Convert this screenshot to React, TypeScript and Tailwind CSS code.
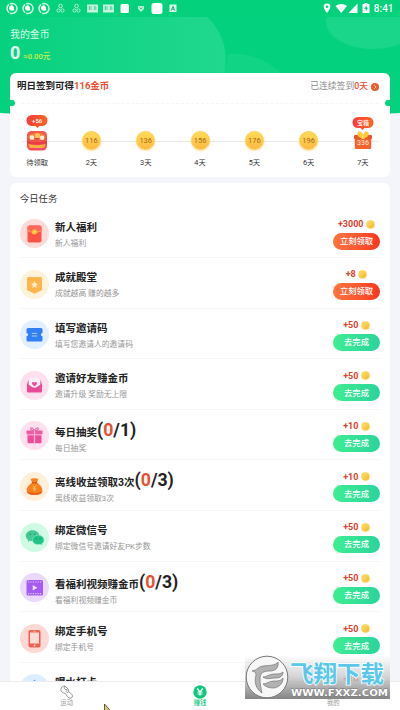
import type { ReactNode } from "react";
import clsx from "clsx";

const FONT = "font-['Roboto','Noto_Sans_CJK_SC',sans-serif]";

const DAYS = [
  { label: "待领取", coins: "+56" },
  { label: "2天", coins: "116" },
  { label: "3天", coins: "136" },
  { label: "4天", coins: "156" },
  { label: "5天", coins: "176" },
  { label: "6天", coins: "196" },
  { label: "7天", coins: "336" },
];

type Task = {
  title: string;
  total?: number;
  desc: string;
  reward: string;
  claim?: boolean;
  bg: string;
  icon: ReactNode;
};

const TASKS: Task[] = [
  {
    title: "新人福利",
    desc: "新人福利",
    reward: "+3000",
    claim: true,
    bg: "bg-[#fddbd8]",
    icon: (
      <>
        <rect x="7.5" y="6.5" width="14" height="17" rx="2" fill="#fd5347" />
        <path d="M7.5 11.500c4 2.500 10 2.500 14 0V8.500a2 2 0 0 0-2-2h-10a2 2 0 0 0-2 2z" fill="#ff695c" />
        <path d="M7.500 11.500c4 2.500 10 2.500 14 0" fill="none" stroke="#ffab55" strokeWidth=".9" />
        <circle cx="14.500" cy="13" r="2.500" fill="#ffca45" />
      </>
    ),
  },
  {
    title: "成就殿堂",
    desc: "成就越高 赚的越多",
    reward: "+8",
    claim: true,
    bg: "bg-[#fff2da]",
    icon: (
      <>
        <path d="M7 8.500a1.500 1.500 0 0 1 1.500-1.500h12A1.500 1.500 0 0 1 22 8.500V20l-7.500 3.700L7 20z" fill="#fdb54d" />
        <path d="m14.500 11.300 1.100 2.200 2.400.3-1.800 1.700.5 2.400-2.200-1.200-2.200 1.200.5-2.400-1.800-1.700 2.400-.3z" fill="#fff0ce" />
      </>
    ),
  },
  {
    title: "填写邀请码",
    desc: "填写您邀请人的邀请码",
    reward: "+50",
    bg: "bg-[#e2efff]",
    icon: (
      <>
        <path d="M6.500 9.500a1.500 1.500 0 0 1 1.500-1.500h13a1.500 1.500 0 0 1 1.500 1.500v3.500a1.600 1.600 0 0 0 0 3.200v3.800a1.500 1.500 0 0 1-1.500 1.500H8A1.500 1.500 0 0 1 6.500 20v-3.800a1.600 1.600 0 0 0 0-3.200z" fill="#317ff6" />
        <path d="M11.800 13.400h5.400M11.800 16h5.400" stroke="#a8ceff" strokeWidth="1" />
      </>
    ),
  },
  {
    title: "邀请好友赚金币",
    desc: "邀请升级 奖励无上限",
    reward: "+50",
    bg: "bg-[#fee0ee]",
    icon: (
      <>
        <path d="M7 12 9.500 8h10l2.500 4v3H7z" fill="#f386b8" />
        <rect x="9" y="7" width="11" height="11" rx="1.500" fill="#fff0f7" />
        <path d="M14.500 15.200c-4.400-2.700-2-5.400 0-3.600 2-1.800 4.400.9 0 3.600z" fill="#ec4d98" />
        <path d="M7 12.500l5 3.500c1.500 1 3.500 1 5 0l5-3.500V20a1.500 1.500 0 0 1-1.500 1.500h-12A1.500 1.500 0 0 1 7 20z" fill="#ea4a95" />
      </>
    ),
  },
  {
    title: "每日抽奖",
    total: 1,
    desc: "每日抽奖",
    reward: "+10",
    bg: "bg-[#fee0ee]",
    icon: (
      <>
        <path d="M14.500 10c-5-.5-4.500-4-2.300-3 1.300.6 2.300 3 2.300 3s1-2.400 2.300-3c2.200-1 2.700 2.500-2.300 3z" fill="none" stroke="#ee67a8" strokeWidth="1.100" />
        <rect x="6.500" y="9.500" width="16" height="4" rx=".8" fill="#ef5ba2" />
        <path d="M7.500 14.200h14V21a1.300 1.300 0 0 1-1.300 1.300H8.800A1.300 1.300 0 0 1 7.500 21z" fill="#ec4c98" />
        <path d="M14.500 9.500v12.800" stroke="#fbbcd9" strokeWidth="1.300" />
      </>
    ),
  },
  {
    title: "离线收益领取3次",
    total: 3,
    desc: "离线收益领取3次",
    reward: "+10",
    bg: "bg-[#fff0dc]",
    icon: (
      <>
        <path d="M10.500 6.500c1.500 1 2.500-.8 4 0 1.500-.8 2.500 1 4 0l-1.500 4.200c3.500 1.900 5.700 5.200 5.400 8.300-.3 3-3.900 3.800-7.900 3.800S7 22 6.700 19c-.3-3.100 1.900-6.400 5.400-8.300z" fill="#f9801f" />
        <path d="M7 19.500c4 2 11 2 15.300-.3-.8 2.900-4 3.600-7.800 3.600S7.700 22.200 7 19.500z" fill="#ef5b12" />
        <path d="M12 10.700h5" stroke="#d9480d" strokeWidth="1.100" />
        <path d="m12.800 13.500 1.700 2 1.700-2M14.500 15.500v4M12.700 16.200h3.600M12.700 17.900h3.600" fill="none" stroke="#ffc55d" strokeWidth=".8" />
      </>
    ),
  },
  {
    title: "绑定微信号",
    desc: "绑定微信号邀请好友PK步数",
    reward: "+50",
    bg: "bg-[#cffae3]",
    icon: (
      <>
        <path d="M12.500 7.200c-4 0-6.700 2.500-6.700 5.500 0 1.800.9 3.300 2.500 4.300l-.5 1.900 2.300-1.200c5.500 1.300 9.300-1.500 9.300-5 0-3-2.900-5.500-6.900-5.500z" fill="#45c994" />
        <path d="M18.300 12.200c-3.400 0-5.900 2-5.900 4.700s2.500 4.700 5.900 4.700c.7 0 1.400-.1 2-.3l2 1-.4-1.600c1.300-.9 2.100-2.200 2.100-3.800 0-2.700-2.400-4.700-5.700-4.700z" fill="#1fc583" stroke="#baf3d8" strokeWidth=".4" />
        <g fill="#18875b">
          <circle cx="10.200" cy="11.200" r=".7" />
          <circle cx="14.600" cy="11.200" r=".7" />
          <circle cx="16.400" cy="15.700" r=".6" />
          <circle cx="20.100" cy="15.700" r=".6" />
        </g>
      </>
    ),
  },
  {
    title: "看福利视频赚金币",
    total: 3,
    desc: "看福利视频赚金币",
    reward: "+50",
    bg: "bg-[#ead9fd]",
    icon: (
      <>
        <rect x="6.500" y="7" width="16.500" height="15.500" rx="1.500" fill="#a45bf3" />
        <path d="M8 9h14M8 20.600h14" stroke="#e4ccff" strokeWidth="1.200" strokeDasharray="1.200 1.200" />
        <path d="M12.700 12v5.600l4.700-2.800z" fill="#f0e0ff" />
      </>
    ),
  },
  {
    title: "绑定手机号",
    desc: "绑定手机号",
    reward: "+50",
    bg: "bg-[#fed8d4]",
    icon: (
      <>
        <rect x="8.500" y="6" width="12" height="17.500" rx="2" fill="#f0614f" />
        <rect x="10" y="8.500" width="9" height="11" fill="#ffdcd6" />
        <path d="M13 7.300h3" stroke="#ffc5bd" strokeWidth=".7" />
        <circle cx="14.500" cy="21.500" r=".9" fill="#ffdcd6" />
      </>
    ),
  },
  {
    title: "喝水打卡",
    desc: "喝水打卡",
    reward: "+10",
    bg: "bg-[#dceeff]",
    icon: <path d="M14.500 5.500c2.500 3.500 5 6.500 5 9.500a5 5 0 0 1-10 0c0-3 2.500-6 5-9.500z" fill="#4f9df5" />,
  },
];

const StatusBar = () => (
  <header className="relative flex h-[17px] shrink-0 items-center bg-[#03d17b] text-white">
    <svg viewBox="0 0 180 17" className="h-[17px] w-[180px]" fill="none">
      {[12, 28, 44].map((x) => (
        <g key={x}>
          <circle cx={x} cy="8.500" r="5" stroke="#d8fbec" strokeWidth="1.500" strokeDasharray="9.500 1" />
          <path d={`M${x - 2.5} 9.500a2.500 2.500 0 0 1 4-3l1 4h-4z`} fill="#fff" />
        </g>
      ))}
      {[60.5, 76.5].map((x) => (
        <g key={x} stroke="#b4f2d7" strokeWidth="1">
          <circle cx={x} cy="6" r="1.800" />
          <circle cx={x - 2} cy="10.500" r="1.600" />
          <circle cx={x + 2} cy="10.500" r="1.600" />
        </g>
      ))}
      {[92.5, 108.5].map((x) => (
        <g key={x}>
          <rect x={x - 5.5} y="4.500" width="11" height="8" fill="#c5f5e0" />
          <path d={`M${x - 4} 7h3.500M${x + 1} 7h3M${x - 4} 9h3.500M${x + 1} 9h3M${x - 3} 6v4M${x + 2.5} 6v4`} stroke="#32cf8e" strokeWidth=".7" />
        </g>
      ))}
      <rect x="120.500" y="4" width="8.500" height="9" rx="1.500" fill="#fff" />
      <path d="M138 6h6v3l-3 3-3-3z" fill="#b8f1d8" />
      <path d="M139.500 7.500 141 9l1.500-1.500" stroke="#28b87b" strokeWidth=".8" />
      <rect x="151.500" y="3" width="11" height="11" rx="2.500" fill="#fff" />
      <rect x="169.500" y="4.500" width="7" height="7.500" fill="#d7f8ea" />
      <path d="m171.300 10.500 1.700-4.200 1.700 4.200M172 9.200h2" stroke="#208d62" strokeWidth=".8" />
    </svg>
    <svg viewBox="0 0 50 17" className="ml-auto h-[17px] w-[50px]" fill="#fff">
      <path d="M7 3.500a3.300 3.300 0 0 0-3.300 3.300C3.700 9.300 7 13 7 13s3.300-3.700 3.300-6.200A3.300 3.300 0 0 0 7 3.500zm0 2a1.200 1.200 0 1 1 0 2.500 1.200 1.200 0 0 1 0-2.500z" />
      <path d="M15.500 6c3.400-2.800 8.100-2.800 11.500 0l-5.700 7z" />
      <path d="M37.500 3.500V13H28.500z" />
      <path fillRule="evenodd" d="M42.500 4h2V3h3v1h2v9h-7zM46.700 5l-2.500 3.900h1.600V11.500l2.300-3.700h-1.400z" />
    </svg>
    <span className="ml-[3.500px] mr-[6.500px] text-[10px] font-medium leading-none">8:41</span>
  </header>
);

const Coin = () => (
  <span className="-mt-px size-[9px] rounded-full border border-[#f9d455] bg-linear-to-br from-[#ffe36a] to-[#f3b52b]" />
);

const Bubble = ({ children }: { children: ReactNode }) => (
  <span className="absolute -top-[25px] left-1/2 flex h-[10.500px] w-[21px] -translate-x-1/2 items-center justify-center rounded-full bg-linear-to-r from-[#f53d3a] to-[#fb6420] text-[6px] font-medium text-white">
    {children}
    <svg viewBox="0 0 4 2" className="absolute -bottom-[2px] left-[8.500px] h-[2px] w-1">
      <path d="M0 0h4L2 2z" fill="#f7502e" />
    </svg>
  </span>
);

const DayMarker = ({ index, coins }: { index: number; coins: string }) => {
  if (index === 0) {
    return (
      <div className="relative flex size-5 items-center justify-center">
        <div className="absolute inset-x-0 top-[9.500px]">
          <div className="relative h-0">
            <Bubble>{coins}</Bubble>
          </div>
        </div>
        <svg viewBox="0 0 22 20" className="h-5 w-[22px] shrink-0">
          <rect x="1" y="0" width="20" height="19.500" rx="4.500" fill="#f4554a" />
          <path d="M2 6C5 0 17 0 20 6l-2.500 3h-13z" fill="#f77f42" />
          <circle cx="6" cy="6.500" r="2.300" fill="#fff0dc" />
          <circle cx="11.500" cy="4.800" r="2.600" fill="#ffc45c" />
          <path d="m8 7 3 2.500L14 7z" fill="#e93c47" />
          <circle cx="16" cy="6.800" r="2.200" fill="#fff0dc" />
          <path d="M1 9.500c5 2 15 2 20 0V12c-4 2-16 2-20 0z" fill="#e93c47" />
          <path d="M2.500 13c4 1.500 13 1.500 17 0l-1.500 4H4z" fill="#ffb13d" />
          <path d="M4 17.800h14" stroke="#f3437b" strokeWidth="1.500" />
        </svg>
      </div>
    );
  }
  if (index === 6) {
    return (
      <div className="relative flex size-5 items-center justify-center">
        <div className="absolute inset-x-0 top-[11.500px]">
          <div className="relative h-0">
            <Bubble>宝箱</Bubble>
          </div>
        </div>
        <svg viewBox="0 0 20 20" className="size-5">
          <rect x="1.800" y="6" width="16.400" height="12" rx="1" fill="#f7622f" />
          <rect x="1" y="4" width="18" height="4" rx="1" fill="#ee5526" />
          <path d="M10 7C3 7.500 3 0 7 .5 9 1 10 4 10 4s1-3 3-3.500C17 0 17 7.500 10 7z" fill="#ffc739" />
          <path d="M8.500 4h3v4h-3z" fill="#ffdc5c" />
        </svg>
        <span className="absolute top-[9px] text-[7px] leading-none text-[#fff1d4]">{coins}</span>
      </div>
    );
  }
  return (
    <div className="flex size-[19px] items-center justify-center rounded-full border-[1.500px] border-[#fbd04a] bg-linear-to-b from-[#ffdc58] to-[#fdb940] text-[7.500px] text-[#a9671a] shadow-[0_1px_2px_#fdd9a0]">
      {coins}
    </div>
  );
};

const SignCard = () => (
  <section className="relative mx-[10px] h-[104px] rounded-[6px] bg-white">
    <div className="flex h-[27px] items-center pl-[7px] pr-[11px] text-[9.500px]">
      <h2 className="font-bold text-[#222]">
        明日签到可得<span className="text-[#e8502f]">116金币</span>
      </h2>
      <p className="ml-auto text-[8.800px] text-[#8c8c8c]">
        已连续签到<span className="font-medium text-[#e8502f]">0天</span>
      </p>
      <svg viewBox="0 0 8 8" className="ml-[3px] size-2">
        <circle cx="4" cy="4" r="4" fill="#ea5b2d" />
        <path d="M3.200 2.200 5 4 3.200 5.800" fill="none" stroke="#ffd9c8" strokeWidth=".9" />
      </svg>
    </div>
    <div className="mx-3 mt-[3px] border-t border-dashed border-[#f5f5f7]" />
    <span className="absolute -left-[5px] top-[27px] h-[6px] w-[10px] rounded-full bg-[#04d17d]" />
    <span className="absolute -right-[5px] top-[27px] h-[6px] w-[10px] rounded-full bg-[#04d17d]" />
    <div className="relative mt-[26.500px]">
      <div className="absolute inset-x-[11px] top-[10px] h-px bg-[#e9e9ed]" />
      <ul className="relative flex">
        {DAYS.map((day, i) => (
          <li key={day.label} className="flex w-[54.300px] shrink-0 flex-col items-center">
            <div className="flex h-5 items-center">
              <DayMarker index={i} coins={day.coins} />
            </div>
            <span className="mt-[7px] text-[7.300px] leading-[10px] text-[#333]">{day.label}</span>
          </li>
        ))}
      </ul>
    </div>
  </section>
);

const TaskRow = ({ task }: { task: Task }) => {
  const counted = task.total !== undefined;
  return (
    <li className="flex h-[50.600px] border-b border-[#f6f6f8]">
      <div className={clsx("mt-[11.500px] size-[29px] shrink-0 rounded-full", task.bg)}>
        <svg viewBox="0 0 29 29" className="size-[29px]">
          {task.icon}
        </svg>
      </div>
      <div className={clsx("ml-[6px]", counted ? "pt-[10px]" : "pt-[12px]")}>
        <h3 className={clsx("flex items-baseline text-[10.500px] font-bold text-[#222]", counted ? "h-[23px] leading-[21px]" : "h-[18px] leading-[15px]")}>
          {task.title}
          {counted && (
            <span className="text-[17.700px]">
              (<span className="text-[#e8502f]">0</span>/{task.total})
            </span>
          )}
        </h3>
        <p className="text-[7.800px] leading-[12px] text-[#969696]">{task.desc}</p>
      </div>
      <div className="ml-auto flex w-[47px] flex-col items-center pt-[11px]">
        <div className="flex h-[12px] items-center gap-[2.500px] text-[9px] font-bold text-[#d9432f]">
          {task.reward}
          <Coin />
        </div>
        <button
          className={clsx(
            "mt-[2px] flex h-[17px] w-full shrink-0 items-center justify-center rounded-full bg-linear-to-r text-[8.300px] font-medium text-white",
            task.claim ? "from-[#fc7541] to-[#f93420]" : "from-[#3eee90] to-[#2ad49c]"
          )}
        >
          {task.claim ? "立刻领取" : "去完成"}
        </button>
      </div>
    </li>
  );
};

const BottomNav = () => (
  <nav className="relative flex h-[29px] shrink-0 border-t border-[#ededf0] bg-white text-[6.300px] leading-[8px] text-[#999]">
    <div className="flex w-1/3 flex-col items-center pt-[3px]">
      <svg viewBox="0 0 16 16" className="h-[14px] w-[15px]" fill="none" stroke="#858585" strokeWidth="1" strokeLinejoin="round">
        <path d="M1.500 5.500C1.500 3 4 .8 6 1.200L9.500 4c.8.800 1 2 .7 3l4 4c1.300 1.500.5 4-1.700 4-1.500 0-2.500-.8-3.500-2L6.500 9.500C4 9 1.500 8 1.500 5.500z" />
        <path d="M6 1.200C5 3 5.500 5 7.500 5.500L9.500 4M7 7.500l2-1.200M8.300 9l2-1.200" />
      </svg>
      <span>运动</span>
    </div>
    <div className="flex w-1/3 flex-col items-center pt-[3px] text-[#14c780]">
      <svg viewBox="0 0 14 14" className="size-[14px]">
        <circle cx="7" cy="7" r="6.700" fill="#14c780" />
        <path d="m4.300 3.500 2.700 3.300 2.700-3.300M7 6.800v4M4.500 7h5M4.500 9h5" fill="none" stroke="#fff" strokeWidth="1.200" />
      </svg>
      <span className="font-medium">赚钱</span>
    </div>
    <div className="flex w-1/3 flex-col items-center pt-[3px]">
      <svg viewBox="0 0 14 14" className="size-[14px]" fill="none" stroke="#858585">
        <circle cx="7" cy="4.500" r="2.800" />
        <path d="M2 12.500c.5-5 9.500-5 10 0z" />
      </svg>
      <span>我的</span>
    </div>
  </nav>
);

const Watermark = () => (
  <div className="absolute left-[245px] top-[655px] h-[44px] w-[145px] bg-linear-to-b from-[#ffffff00] via-[#c4c4c4bb] to-[#858585]">
    <svg viewBox="0 0 145 44" className="h-[44px] w-[145px]">
      <circle cx="22" cy="22" r="20.800" fill="#f7f7f7" stroke="#777" strokeWidth="1" />
      <g fill="#b2b2b2" stroke="#747474" strokeWidth=".7">
        <path d="M7 16c6-1 5-4 11-5 6-.8 12 0 15-4 1 6-3 9-8 9-7 0-10 2-10 8 0 5 1 9 2 14-6-4-8-11-6-18 0-2-1-4-4-4z" />
        <path d="M18 22c4 0 6-3 11-3 4 0 7 0 9-2 0 4-3 6-7 6-5 0-9 2-13-1z" />
        <path d="M18 29c4 0 6-3 11-3 4 0 7 0 9-3 0 6-4 9-9 10-5 0-8-1-11-4z" />
      </g>
      <text x="45" y="26.500" textLength="94" lengthAdjust="spacingAndGlyphs" fontSize="23" fontWeight="700" fill="#5bc7ea" stroke="#f3fcff" strokeWidth="1.800" paintOrder="stroke" className="font-['Noto_Sans_CJK_SC',sans-serif]">
        飞翔下载
      </text>
      <text x="46" y="40.500" textLength="97" lengthAdjust="spacingAndGlyphs" fontSize="9.500" fontWeight="700" fill="#fff" stroke="#777" strokeWidth=".8" paintOrder="stroke" className="font-['DejaVu_Sans',sans-serif]">
        WWW.FXXZ.COM
      </text>
    </svg>
  </div>
);

export default function App() {
  return (
    <div className={clsx("relative flex h-[710px] w-[400px] flex-col overflow-hidden bg-[#f4f5fb]", FONT)}>
      <svg viewBox="0 0 400 120" className="absolute left-0 top-0 h-[120px] w-[400px]">
        <defs>
          <linearGradient id="glow" x1="0" x2="1" y1="0" y2="0">
            <stop offset="0" stopColor="#06d17e" />
            <stop offset=".5" stopColor="#14d487" />
            <stop offset="1" stopColor="#20d88e" />
          </linearGradient>
        </defs>
        <path d="M0 0h400v113q-200 12-400 0z" fill="#04d17d" />
        <path d="M0 17h207c14 13 20 30 18.500 47-1 13-5 25-12 36H0z" fill="url(#glow)" />
        <path d="M228 54c22-2 42 8 54 20h-58c2-6 3-13 4-20z" fill="#12d485" />
        <ellipse cx="373" cy="22" rx="47" ry="27" fill="#1ad68b" />
      </svg>

      <StatusBar />

      <main className="relative min-h-0 flex-1 overflow-hidden">
        <div className="h-[56px] pl-[10px] pt-[11px] text-white">
          <p className="text-[9.900px] leading-[13px] text-[#d8fbea]">我的金币</p>
          <p className="mt-[2px] flex items-baseline leading-[19px]">
            <b className="text-[18px] text-[#e5fff3]">0</b>
            <span className="ml-[3px] text-[7.600px] font-medium text-[#cdf04a]">≈0.00元</span>
          </p>
        </div>

        <SignCard />

        <section className="mx-[10px] mt-[6px] rounded-t-[6px] bg-white px-[10px]">
          <h2 className="h-[24.500px] pt-[9px] text-[9.300px] leading-[14px] text-[#333]">今日任务</h2>
          <ul>
            {TASKS.map((task) => (
              <TaskRow key={task.title} task={task} />
            ))}
          </ul>
        </section>
      </main>

      <BottomNav />
      <Watermark />

      {/* Mouse pointer */}
      <svg viewBox="0 0 10 12" className="absolute left-[103px] top-[703px] h-3 w-[10px]">
        <path d="M1.500 1v12l3-3h5z" fill="#e0c878" stroke="#554a2c" strokeWidth=".9" />
      </svg>
    </div>
  );
}
